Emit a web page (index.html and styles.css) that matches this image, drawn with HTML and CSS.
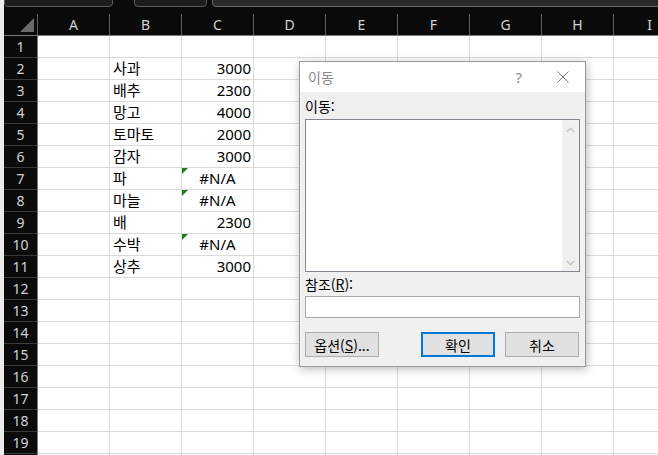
FILE: index.html
```html
<!DOCTYPE html>
<html lang="ko">
<head>
    <meta charset="UTF-8">
    <title>이동</title>
    <link rel="stylesheet" href="styles.css">
</head>
<body>

    <div class="app">
        <div class="topbar">
            <div class="box name-box"></div>
            <div class="box fx-box"></div>
            <div class="box formula-box"></div>
        </div>

        <div class="sheet">
            <div class="row head">
                <div class="corner"></div><div>A</div><div>B</div><div>C</div><div>D</div><div>E</div><div>F</div><div>G</div><div>H</div><div>I</div>
            </div>
            <div class="row"><div class="rh">1</div><div></div><div></div><div></div><div></div><div></div><div></div><div></div><div></div><div></div></div>
            <div class="row"><div class="rh">2</div><div></div><div class="txt">사과</div><div class="num">3000</div><div></div><div></div><div></div><div></div><div></div><div></div></div>
            <div class="row"><div class="rh">3</div><div></div><div class="txt">배추</div><div class="num">2300</div><div></div><div></div><div></div><div></div><div></div><div></div></div>
            <div class="row"><div class="rh">4</div><div></div><div class="txt">망고</div><div class="num">4000</div><div></div><div></div><div></div><div></div><div></div><div></div></div>
            <div class="row"><div class="rh">5</div><div></div><div class="txt">토마토</div><div class="num">2000</div><div></div><div></div><div></div><div></div><div></div><div></div></div>
            <div class="row"><div class="rh">6</div><div></div><div class="txt">감자</div><div class="num">3000</div><div></div><div></div><div></div><div></div><div></div><div></div></div>
            <div class="row"><div class="rh">7</div><div></div><div class="txt">파</div><div class="err">#N/A</div><div></div><div></div><div></div><div></div><div></div><div></div></div>
            <div class="row"><div class="rh">8</div><div></div><div class="txt">마늘</div><div class="err">#N/A</div><div></div><div></div><div></div><div></div><div></div><div></div></div>
            <div class="row"><div class="rh">9</div><div></div><div class="txt">배</div><div class="num">2300</div><div></div><div></div><div></div><div></div><div></div><div></div></div>
            <div class="row"><div class="rh">10</div><div></div><div class="txt">수박</div><div class="err">#N/A</div><div></div><div></div><div></div><div></div><div></div><div></div></div>
            <div class="row"><div class="rh">11</div><div></div><div class="txt">상추</div><div class="num">3000</div><div></div><div></div><div></div><div></div><div></div><div></div></div>
            <div class="row"><div class="rh">12</div><div></div><div></div><div></div><div></div><div></div><div></div><div></div><div></div><div></div></div>
            <div class="row"><div class="rh">13</div><div></div><div></div><div></div><div></div><div></div><div></div><div></div><div></div><div></div></div>
            <div class="row"><div class="rh">14</div><div></div><div></div><div></div><div></div><div></div><div></div><div></div><div></div><div></div></div>
            <div class="row"><div class="rh">15</div><div></div><div></div><div></div><div></div><div></div><div></div><div></div><div></div><div></div></div>
            <div class="row"><div class="rh">16</div><div></div><div></div><div></div><div></div><div></div><div></div><div></div><div></div><div></div></div>
            <div class="row"><div class="rh">17</div><div></div><div></div><div></div><div></div><div></div><div></div><div></div><div></div><div></div></div>
            <div class="row"><div class="rh">18</div><div></div><div></div><div></div><div></div><div></div><div></div><div></div><div></div><div></div></div>
            <div class="row"><div class="rh">19</div><div></div><div></div><div></div><div></div><div></div><div></div><div></div><div></div><div></div></div>
            <div class="row"><div class="rh"></div><div></div><div></div><div></div><div></div><div></div><div></div><div></div><div></div><div></div></div>
        </div>
    </div>

    <!-- 이동 (Go To) dialog -->
    <div class="dialog">
        <div class="title-bar">
            <span class="title">이동</span>
            <span class="help">?</span>
            <svg class="close" width="12" height="12" viewBox="0 0 12 12">
                <path d="M0.5 0.5 L11.5 11.5 M11.5 0.5 L0.5 11.5" stroke="#7a7a7a" stroke-width="1" fill="none"/>
            </svg>
        </div>
        <div class="dialog-body">
            <div class="label">이동:</div>
            <div class="listbox">
                <div class="list-area"></div>
                <div class="scroll">
                    <svg width="9" height="6" viewBox="0 0 9 6"><path d="M0.8 5 L4.5 1.3 L8.2 5" stroke="#c4c4c4" stroke-width="1.6" fill="none"/></svg>
                    <svg width="9" height="6" viewBox="0 0 9 6"><path d="M0.8 1 L4.5 4.7 L8.2 1" stroke="#c4c4c4" stroke-width="1.6" fill="none"/></svg>
                </div>
            </div>
            <div class="label ref-label">참조(<u>R</u>):</div>
            <div class="input"></div>
            <div class="buttons">
                <button class="btn">옵션(<u>S</u>)...</button>
                <button class="btn primary">확인</button>
                <button class="btn">취소</button>
            </div>
        </div>
    </div>

</body>
</html>
```

FILE: styles.css
```css
body {
    margin: 0;
    background-color: #0a0a0a;
    font-family: "Noto Sans", "Noto Sans CJK KR", sans-serif;
    overflow: hidden;
}
.app {
    border-left: 4px solid #ececec;
    height: 455px;
    overflow: hidden;
}

/* top bar (name box / formula bar, cut off) */
.topbar {
    height: 14px;
    display: flex;
}
.box {
    height: 11px;
    margin-top: -4px;
    box-sizing: border-box;
    border: 1px solid #5a5a5a;
    border-radius: 4px;
    background-color: #1c1c1c;
}
.name-box {
    width: 109px;
}
.fx-box {
    width: 73px;
    margin-left: 21px;
}
.formula-box {
    flex: 1;
    margin-left: 5px;
    margin-right: -10px;
    background-color: #2a2a2a;
    border-color: #6a6a6a;
}

/* grid */
.row {
    display: grid;
    grid-template-columns: 34px repeat(9, 72px);
    height: 22px;
}
.row > div {
    box-sizing: border-box;
    border-right: 1px solid #dadada;
    border-bottom: 1px solid #dadada;
    background-color: #fff;
    font-size: 15px;
    line-height: 21px;
    color: #000;
    white-space: nowrap;
    position: relative;
}
.row.head > div {
    background-color: #0a0a0a;
    color: #d2d2d2;
    font-size: 14px;
    text-align: center;
    border-right-color: #5e5e5e;
    border-bottom-color: #7a7a7a;
}
.row.head > .corner::after {
    content: "";
    position: absolute;
    right: 3px;
    bottom: 3px;
    width: 14px;
    height: 14px;
    background-color: #6a6a6a;
    clip-path: polygon(100% 0, 100% 100%, 0 100%);
}
.row > .rh {
    background-color: #0a0a0a;
    color: #d2d2d2;
    font-size: 14px;
    text-align: center;
    border-right-color: #7a7a7a;
    border-bottom-color: #3a3a3a;
}
.txt {
    padding-left: 3px;
}
.num {
    text-align: right;
    padding-right: 2px;
}
.err {
    text-align: center;
}
.err::before {
    content: "";
    position: absolute;
    left: 0;
    top: 0;
    width: 6px;
    height: 6px;
    background-color: #1e7b1e;
    clip-path: polygon(0 0, 100% 0, 0 100%);
}

/* dialog */
.dialog {
    position: absolute;
    left: 299px;
    top: 61px;
    width: 287px;
    height: 306px;
    box-sizing: border-box;
    border: 1px solid #9a9a9a;
    background-color: #f0f0f0;
    box-shadow: 1px 2px 9px rgba(0, 0, 0, 0.28);
    font-family: "Noto Sans CJK KR", "Noto Sans", sans-serif;
    font-size: 14px;
}
.title-bar {
    height: 30px;
    background-color: #fff;
    display: flex;
    align-items: center;
    padding-left: 8px;
    color: #8a8a8a;
}
.title {
    flex: 1;
}
.help {
    font-family: "Noto Sans", sans-serif;
    font-size: 15px;
    margin-right: 35px;
}
.close {
    margin-right: 16px;
}
.dialog-body {
    padding: 0 5px;
}
.label {
    margin-top: 4px;
    line-height: 20px;
    color: #000;
}
.listbox {
    margin-top: 3px;
    height: 153px;
    box-sizing: border-box;
    border: 1px solid #82878f;
    background-color: #fff;
    display: flex;
}
.list-area {
    flex: 1;
}
.scroll {
    width: 17px;
    background-color: #f0f0f0;
    display: flex;
    flex-direction: column;
    justify-content: space-between;
    align-items: center;
    padding: 7px 0 5px;
}
.ref-label {
    margin-top: 2px;
}
.input {
    margin-top: 2px;
    height: 22px;
    box-sizing: border-box;
    border: 1px solid #a8a8a8;
    background-color: #fff;
}
.buttons {
    margin-top: 14px;
    display: flex;
}
.btn {
    width: 74px;
    height: 25px;
    box-sizing: border-box;
    border: 1px solid #adadad;
    background-color: #e1e1e1;
    font-family: inherit;
    font-size: 14px;
    color: #000;
    padding: 0;
}
.btn.primary {
    border: 2px solid #0078d7;
    margin-left: 42px;
    margin-right: 10px;
}
```
